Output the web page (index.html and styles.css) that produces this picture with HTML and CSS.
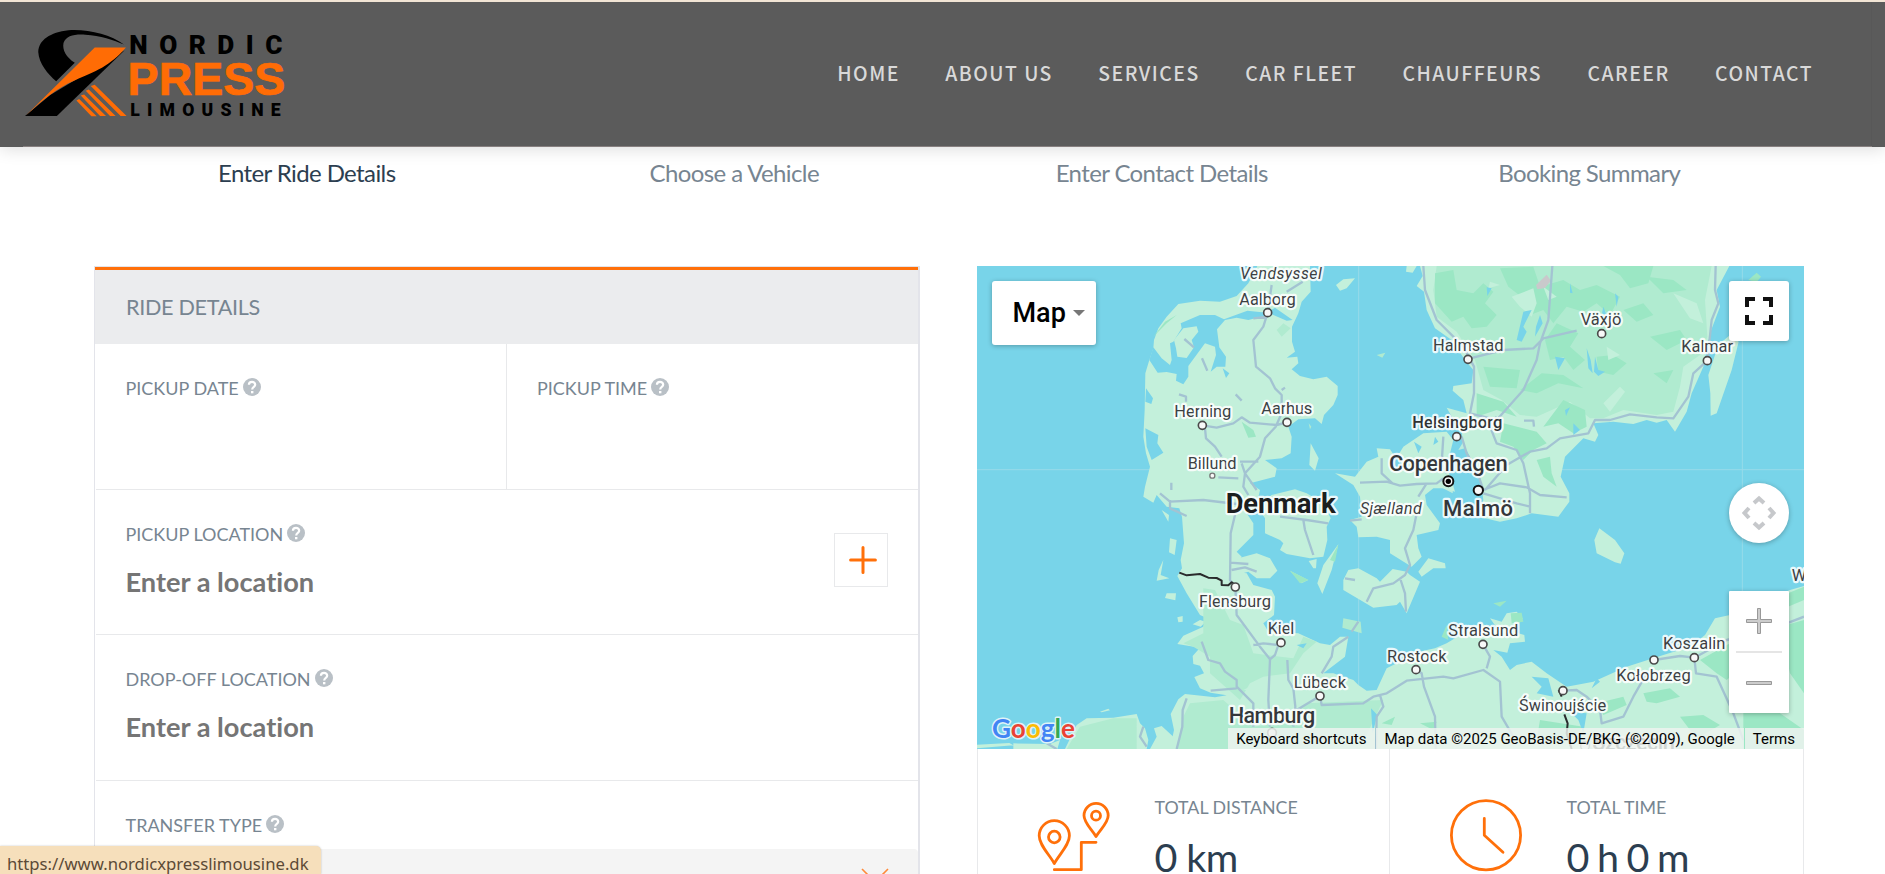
FILE: index.html
```html
<!DOCTYPE html>
<html lang="en">
<head>
<meta charset="utf-8">
<title>Nordic Xpress Limousine</title>
<link rel="stylesheet" href="styles.css">
</head>
<body>
<header class="site-header">
  <svg class="logo" viewBox="70 80 800 280">
    <path fill="#000" d="M372 133C330 102 262 86 205 90C150 96 115 120 114 155C116 190 143 222 168 243L224 188C198 170 186 150 190 128C198 106 222 101 256 103C300 106 342 119 372 133Z"/>
    <path fill="#000" d="M374 150L170 348H74L150 285Z"/>
    <path fill="#ff6c05" d="M284 142H378C330 198 285 215 225 240C165 266 130 298 76 347Z"/>
    <path fill="#ff6c05" d="M272 258L284 254L380 348H362ZM257 272L266 268L347 348H330ZM242 286L252 283L318 348H300ZM229 301L237 297L290 349H274Z"/>
    <text class="logo-dark" x="388" y="162" font-size="79" textLength="461">NORDIC</text>
    <text class="logo-orange" x="383" y="286" font-size="141" textLength="475" lengthAdjust="spacingAndGlyphs">PRESS</text>
    <text class="logo-dark" x="391" y="349" font-size="53" textLength="453">LIMOUSINE</text>
  </svg>
  <nav class="nav">
    <a>HOME</a><a>ABOUT US</a><a>SERVICES</a><a>CAR FLEET</a><a>CHAUFFEURS</a><a>CAREER</a><a>CONTACT</a>
  </nav>
</header>

<ol class="steps">
  <li class="active">Enter Ride Details</li><li>Choose a Vehicle</li><li>Enter Contact Details</li><li>Booking Summary</li>
</ol>

<svg class="defs" width="0" height="0">
  <symbol id="help" viewBox="0 0 18 18"><circle cx="9" cy="9" r="9" fill="#b9c0c6"/><path d="M5.9 6.8C5.9 2.9 12.2 3 12.2 6.7C12.2 8.9 9.2 8.8 9.2 11.4" fill="none" stroke="#fff" stroke-width="2.2"/><rect x="8" y="13" width="2.4" height="2.3" fill="#fff"/></symbol>
</svg>

<main class="booking">
  <section class="card">
    <h2 class="card-title">RIDE DETAILS</h2>
    <div class="row two">
      <div class="field"><label>PICKUP DATE <svg class="help"><use href="#help"/></svg></label></div>
      <div class="field"><label>PICKUP TIME <svg class="help"><use href="#help"/></svg></label></div>
    </div>
    <div class="row split">
      <div class="field"><label>PICKUP LOCATION <svg class="help"><use href="#help"/></svg></label><p class="value">Enter a location</p></div>
      <div class="add"><svg viewBox="0 0 28 28"><path d="M14 1.6V26.4M1.6 14H26.4"/></svg></div>
    </div>
    <div class="row"><div class="field"><label>DROP-OFF LOCATION <svg class="help"><use href="#help"/></svg></label><p class="value">Enter a location</p></div></div>
    <div class="row last">
      <div class="field"><label>TRANSFER TYPE <svg class="help"><use href="#help"/></svg></label></div>
      <div class="select"><svg viewBox="0 0 28 16"><path d="M1 1L14 14L27 1"/></svg></div>
    </div>
  </section>

  <section class="side">
    <div class="map">
      <svg class="map-canvas" viewBox="21 18 2481 1449">
        <rect class="water" x="21" y="18" width="2481" height="1449"/>
        <path class="grid" d="M21 629H2502M1166 18V1467M2317 18V1467"/>
        <!-- Jutland and the southern mainland -->
        <path class="land" d="M862 18L835 70L800 108L750 125L690 122L625 132L590 170L565 205L552 240L550 265L538 300L526 340L524 450L520 530L528 580L540 620L525 680L520 710L550 728L560 705L590 740L628 745L636 770L642 850L632 900L636 925L622 948L650 1000L690 1065L712 1075L700 1100L640 1127L622 1152L690 1163L668 1188L670 1212L690 1217L702 1240L673 1251L690 1285L722 1298L770 1306L735 1312L645 1302L625 1318L602 1362L612 1410L600 1467H2502V978L2460 990L2280 1065L2235 1075L2205 1125L2160 1160L2080 1185L1970 1220L1870 1265L1790 1280L1730 1240L1685 1205L1640 1215L1620 1230L1595 1190L1570 1170L1612 1178L1620 1150L1665 1145L1663 1125L1630 1115L1658 1075L1640 1055L1610 1060L1595 1085L1560 1075L1585 1110L1530 1090L1430 1150L1395 1165L1360 1172L1330 1185L1250 1225L1220 1290L1190 1292L1165 1275L1150 1260L1090 1240L1060 1240L1125 1190L1135 1130L1110 1130L1080 1155L1050 1150L985 1120L895 1115L880 1090L912 1065L915 1010L905 990L850 975L830 940L795 935L815 890L800 875L850 825L850 790L830 760L860 735L870 690L840 670L915 650L920 625L885 600L935 595L962 580L965 530L955 500L985 478L1035 475L1055 492L1062 465L1090 435L1103 405V378L1070 350L1030 358L990 348L965 328L985 310L982 290L950 293L975 275L966 245V200L985 160L995 125L1022 95L1020 18Z"/>
        <path class="water" d="M550 262L575 295L600 315L605 300L600 250L610 245L635 205L632 190L690 165H735L762 178L832 152L890 158L915 143L968 180L950 182L905 163L835 180L800 173L765 180L741 208L748 262L768 290L766 320H740L722 335L738 285L735 260L705 250L655 318V350L640 373L618 362L620 342L590 336L563 338L538 300ZM528 385L549 415L544 432L526 425ZM526 505L565 525L562 550L580 578L545 600L530 560ZM758 325L778 340L768 354Z"/>
        <path class="land" d="M612 240L640 205L680 199L685 215L665 240L672 262L650 294L622 290L618 265Z"/>
        <path class="land" d="M130 1450L240 1452L270 1440L262 1467H130ZM285 1467L320 1395L350 1375L430 1373L500 1362L510 1390L525 1405L535 1440L530 1467H515ZM540 1467L560 1430L552 1405L575 1398L610 1430L604 1467ZM390 1355L415 1346L420 1351L395 1357ZM21 1454L118 1449L130 1456L21 1465ZM600 835L620 840L614 885L597 877ZM580 900L572 945L598 955L560 962L566 930ZM590 1000L618 1000L616 1021L585 1014ZM622 1072L638 1068V1085L625 1087ZM575 750L597 765L595 785ZM668 1093L690 1080L707 1085L692 1100ZM1098 75L1120 58L1155 55L1130 85L1110 92ZM1022 550L1046 595L1035 632L1018 615ZM862 740L905 705L975 688L1010 700L1060 730L1082 775L1070 800L1072 840L1060 890L1020 895L950 882L930 870L940 850L930 840L885 820V775ZM782 935L805 895L860 880L900 895L922 932L900 955L860 955L835 935L800 945ZM1016 903L1040 897L1038 925H1030ZM1105 853L1085 930L1057 1002L1042 970L1060 915Z"/>
        <path class="mid" d="M960 932L1015 960L995 970ZM1120 1075L1172 1085L1175 1120L1117 1103ZM1220 285L1246 278L1237 293ZM1016 490L1024 500L1020 508Z"/>
        <!-- Zealand, Lolland, Falster, Moen, Bornholm -->
        <path class="land" d="M1095 640L1155 650L1190 605L1225 590L1220 565L1260 568L1275 590L1265 620L1300 625L1285 585L1300 560L1360 520L1430 515L1450 540L1435 600L1440 645L1455 695L1420 685L1390 685L1365 705L1370 735L1410 790L1405 810L1340 825L1345 865L1355 890L1325 920L1260 880V840L1220 830L1165 832L1160 800L1140 780L1175 770L1170 710L1150 675ZM1120 960L1135 930L1165 925L1220 955L1230 965L1268 927L1310 935L1320 945L1350 965L1310 1060L1290 1025L1280 1035L1210 1043L1120 990ZM1345 935L1375 895L1425 910L1427 925H1390L1355 950Z"/>
        <path class="land" d="M1888 805L1935 840L1963 880L1952 911L1935 907L1880 880L1873 840ZM2280 225L2306 245L2285 330L2240 460L2222 467L2221 400L2215 345L2245 255Z"/>
        <!-- Sweden -->
        <path class="land" d="M1310 18H1340L1328 38L1308 35ZM1350 18L1358 48L1340 78L1362 95L1370 150L1395 205L1445 240L1485 300L1510 330L1505 370L1450 378L1448 392L1480 420L1490 460L1430 443L1450 478L1475 510L1478 550L1500 590L1530 650L1540 720L1525 770L1590 785L1640 775L1685 760L1765 770L1798 725V700L1772 650L1785 590L1840 535L1875 545L1885 525L1870 490L1930 485L1990 492L2030 480L2060 488L2090 480L2115 515L2150 455L2165 400L2200 320L2220 220L2250 140L2240 90L2278 18Z"/>
        <path class="mid" d="M1400 18H2225L2205 120L2212 230L2190 285L2140 320L2130 380L2110 455L2060 465L1960 450L1900 475L1860 475L1800 425L1745 450L1700 470L1650 465L1595 420L1540 390L1515 300L1460 215L1400 170L1390 90ZM700 985L735 990L780 1080L820 1095L850 1180L970 1195L1000 1130L1040 1145L1000 1180L960 1240L880 1250L840 1270L810 1320L720 1240V1190L670 1160L640 1150L700 1120ZM660 1330L760 1320L850 1400L920 1390L1010 1330L1240 1320L1170 1467H620L640 1370ZM300 1450L330 1400L430 1375L500 1375L500 1467H290ZM920 210L940 190L962 205L935 230Z"/>
        <path class="deep" d="M1395 40L1450 30L1460 90L1510 100L1540 70L1570 95L1545 130L1580 165L1550 200L1505 205L1480 170L1445 185L1395 130ZM1590 25L1690 20L1710 80L1780 60L1830 90L1880 75L1950 110L1920 165L1880 130L1840 155L1790 140L1750 190L1720 150L1680 165L1660 115L1615 80ZM1900 18H2050L2035 70L1980 85L1950 45ZM1760 190L1825 220L1800 260L1845 300L1810 330L1780 290L1740 300L1725 240ZM1540 320L1650 330L1640 385L1560 380ZM1650 390L1715 340L1780 345L1840 385L1765 370L1700 400ZM1880 290L1930 285L1970 310L1930 345L1885 335ZM1520 400L1600 425L1640 470L1580 450L1520 470ZM1600 490L1700 515L1730 550L1690 570L1660 600L1630 560L1590 545ZM1780 420L1845 450L1850 500L1810 520L1765 490L1720 500ZM1700 600L1740 590L1745 640L1760 680L1720 650ZM1960 150L2020 130L2050 165L2000 185ZM2030 50L2110 60L2150 90L2080 100ZM2040 230L2130 210L2150 240L2090 270ZM2050 340L2110 330L2090 370ZM815 485L850 510L858 530L835 533ZM550 230L585 185L620 165L590 190ZM1105 853L1095 905L1080 900ZM960 932L1015 960L990 970ZM2335 60L2360 38L2373 50L2360 66ZM1622 1060L1655 1058L1660 1085L1625 1090ZM1570 1030L1610 1022L1590 1040ZM1415 1130L1430 1095L1435 1140ZM2280 1070L2502 980V1020L2290 1110ZM2190 1200L2280 1150L2330 1210L2270 1260L2240 1240ZM2020 1300L2100 1285L2130 1310L2060 1330L2030 1325ZM2130 1370L2200 1365L2250 1395L2190 1430L2160 1410ZM2320 1290L2400 1300L2430 1360L2502 1410V1467H2320ZM1710 1380L1840 1400L1800 1440H1700ZM1880 1330L1960 1310L1970 1335L1900 1365ZM1235 1390L1275 1370L1265 1395ZM1350 1390L1400 1385L1390 1410ZM2430 1100L2502 1080V1300L2460 1240Z"/>
        <path class="land" d="M1625 110L1690 85L1700 130L1685 170L1650 140ZM2110 100L2180 130L2200 190L2160 175ZM1560 65L1590 75L1555 85ZM1900 430L1950 380L1965 395L1920 455ZM1720 80L1760 110L1735 120ZM820 1290L880 1260L870 1290ZM1910 260L1950 285L1915 300Z"/>
        <path class="water" d="M1660 155L1685 150L1660 200L1670 215L1655 245L1640 240ZM1710 165L1718 190L1695 230L1698 200ZM1550 82L1565 85L1552 108ZM1755 290L1785 295L1765 330ZM1850 265L1862 300L1868 340L1855 325ZM1875 290L1885 330L1905 335L1885 348L1872 335ZM1900 140L1912 170L1896 160ZM1800 70L1808 100L1800 98ZM1785 450L1800 442L1788 468ZM1935 100L1945 110L1940 140ZM1810 490L1830 510L1810 525ZM1332 545L1355 560L1345 580ZM1395 530L1405 545L1390 555ZM1465 550L1490 590L1520 640L1525 700L1480 690L1440 665L1435 600L1450 555ZM1685 1250L1735 1255L1750 1310L1700 1300L1715 1280ZM1880 1255L1890 1265L1865 1285ZM1800 1355L1850 1360L1840 1420L1825 1380ZM980 1155L1010 1150L1000 1165ZM1203 1345L1222 1365L1208 1420Z"/>
        <path fill="#c9c9cb" d="M1698 75L1730 44L1743 62L1725 84L1702 88Z"/>
        <path class="land" fill-opacity=".9" d="M1465 570L1485 565L1480 545ZM1410 680L1450 675L1448 700Z"/>
        <path class="road" d="M905 75L893 158L880 200L850 240L858 320L900 355L915 385L935 405V460L917 500L885 535L870 590L825 640L820 680L835 705M935 390L945 383M697 496L740 503L790 490L815 472L840 488L920 495L951 487M705 505L708 535L735 560L755 590M810 605H865M745 652L805 655M815 610L825 640L860 690M570 700L600 725L700 720L800 732M600 720V745L650 768M604 668V690M643 237L672 262M696 295L712 332M627 403L648 410V425M797 403L815 422M850 175L893 170M950 95L998 65M795 765L782 820L780 960L796 981L800 1065L870 1160L900 1198L895 1320L900 1400M850 1155L880 1150L925 1155L915 1185L900 1198M785 930L825 922L860 935M780 908L835 912M695 1145L715 1200L750 1210L765 1235L800 1260V1280L850 1330L850 1400M722 1292L800 1285M952 1200L955 1260L970 1285L976 1340L970 1400M980 1350L1050 1308L1055 1335L1180 1330L1210 1310L1250 1300L1310 1262L1420 1250L1450 1255L1540 1230L1590 1265L1595 1370L1630 1430M650 1315L638 1350L637 1400L620 1467M1055 1240L1085 1190L1090 1160L1135 1130M1145 1115L1165 1085M1338 1229L1355 1240L1362 1280L1395 1370L1397 1467M1539 1153L1560 1190L1550 1225M1230 1305L1240 1340L1220 1370L1218 1467M520 1400L510 1430L530 1460M260 1467L230 1450"/>
        <path class="road" d="M930 770L1010 780L1075 790M1000 780L1005 810L1030 885M1140 782L1175 778M1170 668L1250 665L1290 677L1340 672L1400 670L1420 655M1235 595V640L1270 672M1420 530L1415 610L1430 640M1370 670L1345 710M1340 760L1330 810L1305 865L1320 915L1305 945L1270 970L1210 985L1190 1025M1292 960L1305 1000L1308 1055M1125 955L1155 960"/>
        <path class="road" d="M1360 18L1365 90L1400 180L1480 260L1512 320V400L1500 460L1580 480L1660 390L1700 300L1710 250L1735 180L1747 18M1500 295L1600 270L1690 265L1720 235L1820 212M2237 18L2235 90L2245 130L2225 180L2212 302L2170 340L2155 410L2110 475L2060 472L1980 463L1920 480L1875 480L1855 520L1770 535L1730 565L1680 575L1610 615L1545 690M1475 530L1490 580L1520 630L1540 690L1590 670L1670 682L1710 705L1790 712M1540 700L1640 730L1680 740M1580 470L1560 500L1580 550L1640 570L1660 610L1680 700V760M1662 482H1690L1692 500M1779 1292L1820 1290L1850 1310L1890 1350L1895 1390L1960 1370L1990 1310L2030 1240M2052 1200L2130 1188L2173 1193L2178 1240L2240 1250L2290 1360L2320 1440M2173 1193L2270 1140L2400 1110L2502 1070"/>
        <path class="border" d="M628 938L650 946L690 942L715 953L740 954L755 962V975L775 976L785 967L796 976M1766 1290L1775 1310M1783 1363L1793 1390L1790 1420L1805 1467"/>
        <g class="dots">
          <circle cx="893" cy="158" r="12"/><circle cx="697" cy="496" r="12"/><circle cx="951" cy="487" r="12"/><circle class="minor" cx="727" cy="647" r="7.5"/><circle cx="796" cy="981" r="12"/><circle cx="933" cy="1148" r="12"/><circle cx="1050" cy="1308" r="12"/><circle cx="906" cy="1418" r="13"/><circle cx="1494" cy="298" r="12"/><circle cx="1895" cy="221" r="12"/><circle cx="2212" cy="302" r="12"/><circle cx="1460" cy="530" r="12"/><circle cx="1338" cy="1229" r="12"/><circle cx="1539" cy="1153" r="12"/><circle cx="1779" cy="1292" r="12"/><circle cx="2052" cy="1200" r="12"/><circle cx="2173" cy="1193" r="12"/><circle class="minor" cx="1845" cy="1458" r="13"/>
          <circle class="strong" cx="1525" cy="691" r="14"/><circle class="strong" cx="1435" cy="664" r="15"/>
        </g>
        <circle cx="1435" cy="664" r="8"/>
        <g class="labels">
          <text class="it" x="810" y="57" textLength="245">Vendsyssel</text>
          <text x="808" y="134" textLength="169">Aalborg</text>
          <text x="613" y="471" textLength="171">Herning</text>
          <text x="874" y="462" textLength="153">Aarhus</text>
          <text x="653" y="627" textLength="147">Billund</text>
          <text class="country" x="767" y="758" textLength="330">Denmark</text>
          <text class="it" x="1170" y="762" textLength="185">Sjælland</text>
          <text x="687" y="1041" textLength="216">Flensburg</text>
          <text x="893" y="1123" textLength="80">Kiel</text>
          <text x="971" y="1283" textLength="157">Lübeck</text>
          <text class="big" x="776" y="1388" textLength="260">Hamburg</text>
          <text x="1389" y="272" textLength="212">Halmstad</text>
          <text x="1832" y="196" textLength="122">Växjö</text>
          <text x="2134" y="277" textLength="155">Kalmar</text>
          <text class="med" x="1327" y="504" textLength="270">Helsingborg</text>
          <text class="big" x="1257" y="632" textLength="356">Copenhagen</text>
          <text class="big" x="1419" y="768" textLength="210">Malmö</text>
          <text x="1251" y="1205" textLength="179">Rostock</text>
          <text x="1435" y="1128" textLength="210">Stralsund</text>
          <text x="1647" y="1353" textLength="262">Świnoujście</text>
          <text x="1939" y="1263" textLength="223">Kołobrzeg</text>
          <text x="2079" y="1168" textLength="187">Koszalin</text>
          <text x="2465" y="962">Wł</text>
          <text class="big" x="1867" y="1469" textLength="248">Szczecin</text>
        </g>
      </svg>
      <button class="ctl map-type">Map<i></i></button>
      <button class="ctl full"><svg viewBox="0 0 28 28"><path d="M2 10V2H10M18 2H26V10M26 18V26H18M10 26H2V18"/></svg></button>
      <button class="ctl pan"><svg viewBox="0 0 36 36"><path d="M13 8L18 3.5L23 8M13 28L18 32.5L23 28M8 13L3.5 18L8 23M28 13L32.5 18L28 23"/></svg></button>
      <div class="ctl zoom">
        <svg viewBox="0 0 26 26"><path d="M11.5 .5H14.5V11.5H25.5V14.5H14.5V25.5H11.5V14.5H.5V11.5H11.5Z"/></svg>
        <hr>
        <svg viewBox="0 0 26 26"><path d="M.5 11.5H25.5V14.5H.5Z"/></svg>
      </div>
      <svg class="google" viewBox="0 0 90 36"><text x="4" y="25" textLength="83" lengthAdjust="spacingAndGlyphs"><tspan fill="#4285f4">G</tspan><tspan fill="#ea4335">o</tspan><tspan fill="#fbbc04">o</tspan><tspan fill="#4285f4">g</tspan><tspan fill="#34a853">l</tspan><tspan fill="#ea4335">e</tspan></text></svg>
      <div class="credits"><span>Keyboard shortcuts</span><span>Map data ©2025 GeoBasis-DE/BKG (©2009), Google</span><span>Terms</span></div>
    </div>
    <div class="stats">
      <div class="stat">
        <svg viewBox="0 0 74 74"><path d="M17.3 61.5C12 52 2.2 43 2.2 33.8A15.1 15.1 0 0 1 32.4 33.8C32.4 43 22.5 52 17.3 61.5ZM59 34.5C55 27.5 47 21 47 13.5A12 12 0 0 1 71.2 13.5C71.2 21 63 27.5 59 34.5ZM17.3 67.7H44.3V40.3H59"/><circle cx="17.3" cy="35" r="5.8"/><circle cx="59" cy="13.7" r="4.5"/></svg>
        <div><label>TOTAL DISTANCE</label><p>0 km</p></div>
      </div>
      <div class="stat">
        <svg viewBox="0 0 74 74"><circle cx="37" cy="33.3" r="34.6"/><path d="M35.3 16.5V33.3L54 50.2"/></svg>
        <div><label>TOTAL TIME</label><p class="time">0 h 0 m</p></div>
      </div>
    </div>
  </section>
</main>
<div class="status">https://www.nordicxpresslimousine.dk</div>
</body>
</html>
```
FILE: styles.css
```css
* { box-sizing: border-box; }
body { margin: 0; height: 874px; overflow: hidden; background: #fff; font-family: Lato, sans-serif; color: #778591; font-variant-ligatures: none; }
p, h2, ol { margin: 0; padding: 0; font-weight: 400; }
.defs { position: absolute; }

.site-header { display: flex; justify-content: space-between; height: 147px; padding: 24px 72px 0 23px; background: linear-gradient(#585858, #585858) 1871px 0 / 1px 146px no-repeat, linear-gradient(#878080, #878080) 23px 146px / 1849px 1px no-repeat, #5b5b5b; border-top: 2px solid #f2e5d5; background-origin: border-box; box-shadow: 0 2px 16px rgba(0,0,0,.14); }
.logo { width: 267px; height: 93px; margin-top: 1px; }
.logo-dark { font-family: Roboto, sans-serif; font-weight: 900; fill: #000; }
.logo-orange { font-family: "Liberation Sans", sans-serif; font-weight: 700; fill: #ff6c05; stroke: #ff6c05; stroke-width: 2; }
.nav { display: flex; gap: 45.4px; padding-top: 33px; font: 500 19.4px/28px "Noto Sans CJK SC", sans-serif; letter-spacing: 1.48px; color: #d9d9d9; white-space: nowrap; }

.steps { display: grid; grid-template-columns: repeat(4, 1fr); list-style: none; height: 119px; margin: 0 82px 0 93px; padding-top: 11px; text-align: center; font-size: 24px; line-height: 29px; letter-spacing: -.6px; color: #778591; }
.steps .active { color: #2c3e50; }

.booking { display: grid; grid-template-columns: 826px 827px; gap: 57px; padding-left: 94px; height: 608px; }
.card { height: 608px; overflow: hidden; border: 1px solid #e3e4ea; border-width: 1px 2px 0 1px; }
.card-title { height: 77px; border-top: 3px solid #ff700a; background: #ebecee; padding: 24px 0 0 31px; font-size: 21.6px; line-height: 26px; letter-spacing: -.3px; }
.row { height: 145.5px; margin: 0 0 0 1px; border-bottom: 1px solid #e8e9eb; padding: 0 30px 0 29.5px; }
.row.two { display: grid; grid-template-columns: 410px 1fr; padding: 0; }
.two .field { padding-left: 29.5px; }
.two .field + .field { border-left: 1px solid #e8e9eb; padding-left: 30px; }
.row.split { display: flex; justify-content: space-between; }
.row.last { border: 0; padding: 0; }
.last .field { padding-left: 29.5px; }
.field { padding-top: 32px; }
label { display: flex; align-items: center; gap: 4px; font-size: 18px; line-height: 24px; }
.help { width: 18px; height: 18px; position: relative; top: -1px; }
.value { margin-top: 20px; font-size: 27.2px; line-height: 31px; font-weight: 700; color: #757575; }
.add { width: 54px; height: 54px; margin-top: 43px; border: 1px solid #e8e9eb; padding: 12px 0 0 14px; }
.add svg { display: block; width: 28px; height: 28px; fill: none; stroke: #ff700a; stroke-width: 3; stroke-linecap: round; }
.select { height: 26px; overflow: hidden; margin-top: 12px; background: #f4f4f4; border-radius: 4px 4px 0 0; padding: 19px 0 0 765px; }
.select svg { display: block; width: 28px; height: 16px; fill: none; stroke: #ff8a3a; stroke-width: 1.6; }

.map { position: relative; height: 483px; overflow: hidden; font-family: Roboto, sans-serif; }
.map-canvas { display: block; width: 827px; height: 483px; }
.water { fill: #78d4e9; }
.grid { stroke: #97dbe9; stroke-width: 3; fill: none; }
.land { fill: #c3f0db; }
.mid { fill: #b0ebd0; }
.deep { fill: #9be7c4; }
.road { fill: none; stroke: #a3c3d2; stroke-width: 7; stroke-linejoin: round; }
.border { fill: none; stroke: #292b2c; stroke-width: 6; stroke-linejoin: round; }
.dots circle { fill: #f8f8f8; stroke: #4a4a4a; stroke-width: 5; }
.dots .minor { stroke: #777; stroke-width: 4; }
.dots .strong { stroke: #111; stroke-width: 6; }
.labels text { font-size: 49.5px; fill: #3c4043; stroke: #fff; stroke-opacity: .85; stroke-width: 13; stroke-linejoin: round; paint-order: stroke; }
.labels .it { font-style: italic; font-size: 48px; }
.labels .med { font-weight: 500; fill: #303335; }
.labels .big { font-weight: 500; font-size: 66px; fill: #34373b; }
.labels .country { font-weight: 700; font-size: 83px; fill: #1c1e20; }

.ctl { position: absolute; display: block; margin: 0; padding: 0; border: 0; background: #fff; border-radius: 3px; box-shadow: 0 1px 5px rgba(0,0,0,.28); }
.ctl svg { display: block; }
.map-type { left: 15px; top: 15px; width: 104px; height: 64px; display: flex; align-items: center; gap: 7px; padding-left: 20.5px; font: 500 27px Roboto, sans-serif; color: #000; }
.map-type i { border: 6px solid transparent; border-top-color: #777; border-bottom: 0; }
.full { left: 752px; top: 15px; width: 60px; height: 60px; padding: 0 16px; }
.full svg { width: 28px; height: 28px; fill: none; stroke: #111; stroke-width: 4; }
.pan { left: 752px; top: 217px; width: 60px; height: 60px; border-radius: 50%; padding-left: 12px; }
.pan svg { width: 36px; height: 36px; fill: none; stroke: #c6c8cb; stroke-width: 4; }
.zoom { left: 752px; top: 325px; width: 60px; height: 122px; padding: 17px 7px; border-radius: 1px; }
.zoom svg { width: 26px; height: 26px; margin: 0 10px; fill: #ccc; stroke: #999; stroke-width: 1; }
.zoom hr { margin: 17px 0; border: 0; height: 2px; background: #e5e5e5; }
.google { position: absolute; left: 11px; top: 447px; width: 90px; height: 36px; font: 700 27px Lato, sans-serif; }
.google text { stroke: #dff3f8; stroke-width: 3; paint-order: stroke; stroke-linejoin: round; }
.credits { position: absolute; right: 0; bottom: 0; display: flex; height: 21px; font-size: 15px; line-height: 22px; color: #000; white-space: nowrap; }
.credits span { background: rgba(238,243,239,.84); padding: 0 9px 0 8px; margin-left: 1px; }

.stats { display: grid; grid-template-columns: 411px 414px; height: 125px; overflow: hidden; border: solid #e8e9eb; border-width: 0 1px; }
.stat { display: flex; gap: 43.5px; padding: 53px 0 0 59px; }
.stat + .stat { border-left: 1px solid #e8e9eb; }
.stat svg { width: 74px; height: 74px; overflow: visible; fill: none; stroke: #ff700a; stroke-width: 2.8; stroke-linejoin: round; stroke-linecap: round; }
.stat label { line-height: 22px; margin-top: -6px; font-size: 17.8px; }
.stat p { margin-top: 15px; font-size: 39.5px; line-height: 47px; letter-spacing: -.6px; color: #2c3e50; white-space: nowrap; }
.stat .time { letter-spacing: -1.3px; }

.status { position: absolute; left: 0; bottom: 0; width: 321px; height: 28px; padding-left: 7px; border-radius: 0 5px 0 0; background: #f6dfbb; font: 16.7px/35px "Noto Sans", sans-serif; color: #5c4a36; white-space: nowrap; box-shadow: 0 0 2px rgba(0,0,0,.25); }
```
